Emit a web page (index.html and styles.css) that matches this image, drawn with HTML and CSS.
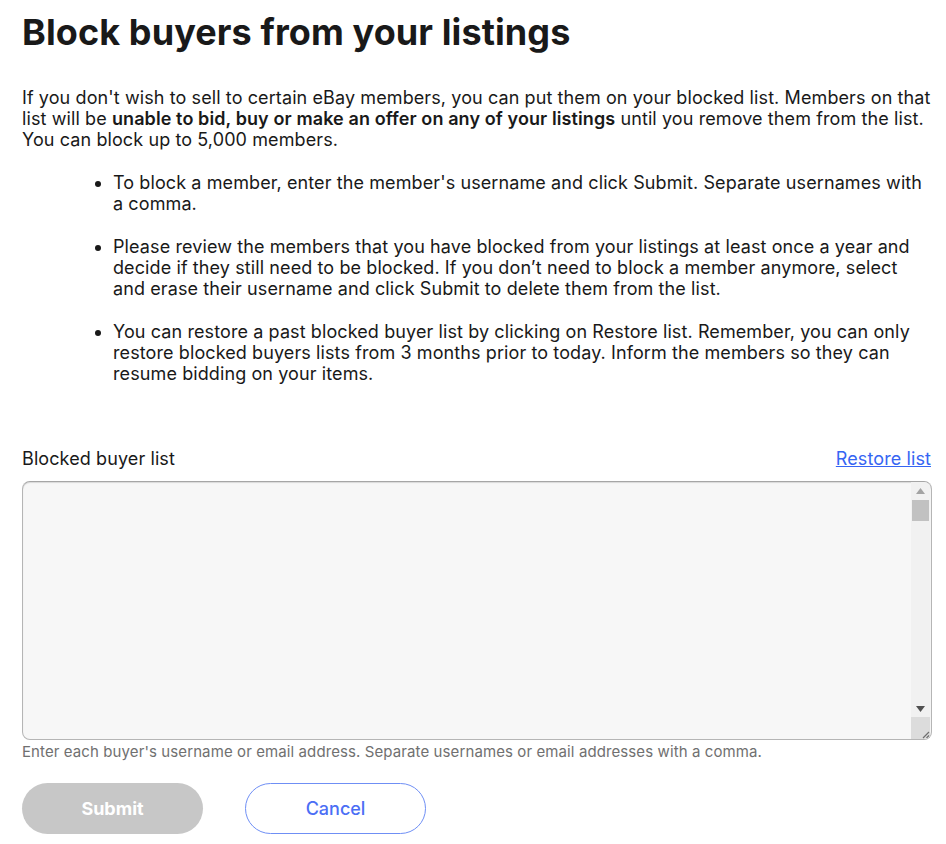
FILE: index.html
```html
<!DOCTYPE html>
<html lang="en">
<head>
<meta charset="utf-8">
<title>Block buyers from your listings</title>
<link rel="stylesheet" href="styles.css">
</head>
<body>
<main class="page">
  <h1 class="title">Block buyers from your listings</h1>
  <p class="intro">If you don't wish to sell to certain eBay members, you can put them on your blocked list. Members on that list will be <strong>unable to bid, buy or make an offer on any of your listings</strong> until you remove them from the list. You can block up to 5,000 members.</p>
  <ul class="tips">
    <li>To block a member, enter the member's username and click Submit. Separate usernames with a comma.</li>
    <li>Please review the members that you have blocked from your listings at least once a year and decide if they still need to be blocked. If you don’t need to block a member anymore, select and erase their username and click Submit to delete them from the list.</li>
    <li>You can restore a past blocked buyer list by clicking on Restore list. Remember, you can only restore blocked buyers lists from 3 months prior to today. Inform the members so they can resume bidding on your items.</li>
  </ul>
  <div class="field">
    <div class="field-head">
      <label class="field-label" for="blocked">Blocked buyer list</label>
      <a class="restore" href="#">Restore list</a>
    </div>
    <div class="list-box">
      <textarea id="blocked" class="list-input"></textarea>
      <div class="scrollbar" aria-hidden="true">
        <div class="sb-arrow">
          <svg width="9" height="6" viewBox="0 0 9 6"><path d="M0 6 L4.5 0 L9 6 Z" fill="#a3a3a3"/></svg>
        </div>
        <div class="sb-thumb"></div>
        <div class="sb-track"></div>
        <div class="sb-arrow">
          <svg width="9" height="6" viewBox="0 0 9 6"><path d="M0 0 L4.5 6 L9 0 Z" fill="#505050"/></svg>
        </div>
        <div class="sb-corner">
          <svg width="10" height="10" viewBox="0 0 10 10"><path d="M9 3 L3 9 M9 6.5 L6.5 9" stroke="#6e6e6e" stroke-width="1.2" fill="none"/></svg>
        </div>
      </div>
    </div>
    <p class="hint">Enter each buyer's username or email address. Separate usernames or email addresses with a comma.</p>
  </div>
  <div class="actions">
    <button class="btn btn-submit" type="button" disabled>Submit</button>
    <button class="btn btn-cancel" type="button">Cancel</button>
  </div>
</main>
</body>
</html>
```
FILE: styles.css
```css
html, body {
  margin: 0;
  padding: 0;
  background: #fff;
}
body {
  font-family: Inter, "Noto Sans", sans-serif;
  color: #191919;
}
.page {
  padding: 10px 15px 0 22px;
}
.title {
  margin: 0;
  font-size: 36px;
  line-height: 44px;
  font-weight: 700;
  letter-spacing: 0.1px;
}
.intro {
  margin: 33px 0 0;
  font-size: 18px;
  line-height: 21px;
  letter-spacing: 0.1px;
}
.intro strong {
  font-weight: 600;
}
.tips {
  margin: 22px 0 0;
  padding-left: 91px;
  font-size: 18px;
  line-height: 21px;
  letter-spacing: 0.1px;
}
.tips li {
  margin-bottom: 22px;
}
.field {
  margin-top: 63px;
}
.field-head {
  display: flex;
  justify-content: space-between;
  align-items: baseline;
  font-size: 18px;
  line-height: 24px;
  letter-spacing: 0.1px;
}
.restore {
  color: #3665f3;
}
.list-box {
  display: flex;
  box-sizing: border-box;
  width: 910px;
  height: 259px;
  margin-top: 10px;
  border: 1px solid #b5b5b5;
  border-top-color: #a6a6a6;
  border-radius: 8px;
  background: #f7f7f7;
  box-shadow: inset 0 1px 1px rgba(0, 0, 0, 0.12);
  overflow: hidden;
}
.list-input {
  flex: 1;
  border: none;
  background: transparent;
  resize: none;
  outline: none;
  padding: 8px 12px;
  font-family: Inter, "Noto Sans", sans-serif;
  font-size: 16px;
}
.scrollbar {
  width: 19px;
  margin-right: 1px;
  display: flex;
  flex-direction: column;
  background: #f1f1f1;
}
.sb-arrow {
  height: 17px;
  display: flex;
  align-items: center;
  justify-content: center;
}
.sb-thumb {
  height: 21px;
  margin: 1px 1px 0;
  background: #c1c1c1;
}
.sb-track {
  flex: 1;
}
.sb-corner {
  height: 22px;
  background: #dcdcdc;
  display: flex;
  align-items: flex-end;
  justify-content: flex-end;
}
.hint {
  margin: 3px 0 0;
  font-size: 15px;
  line-height: 18px;
  color: #707070;
  letter-spacing: 0.1px;
}
.actions {
  display: flex;
  gap: 42px;
  margin-top: 22px;
}
.btn {
  width: 181px;
  height: 51px;
  border-radius: 26px;
  font-family: Inter, "Noto Sans", sans-serif;
  font-size: 18px;
}
.btn-submit {
  border: none;
  background: #c7c7c7;
  color: #fff;
  font-weight: 700;
}
.btn-cancel {
  border: 1px solid #6f8ff5;
  background: #fff;
  color: #4b6ef5;
  font-weight: 500;
}
```
